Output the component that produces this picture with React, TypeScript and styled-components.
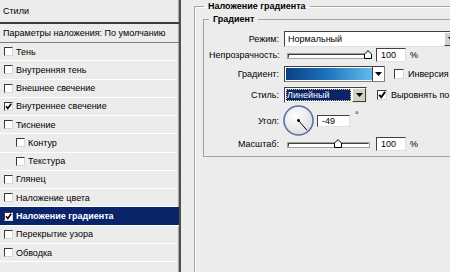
import React from 'react';
import styled, { createGlobalStyle } from 'styled-components';

const GlobalStyle = createGlobalStyle`
  html, body {
    margin: 0;
    padding: 0;
    width: 450px;
    height: 272px;
    overflow: hidden;
    background: #ececec;
  }
  body {
    font-family: 'Liberation Sans', Arial, sans-serif;
    font-size: 9px;
    color: #000;
  }
`;

type Effect = {
  label: string;
  checked?: boolean;
  indent?: boolean;
  selected?: boolean;
};

const effects: Effect[] = [
  { label: 'Тень' },
  { label: 'Внутренняя тень' },
  { label: 'Внешнее свечение' },
  { label: 'Внутреннее свечение', checked: true },
  { label: 'Тиснение' },
  { label: 'Контур', indent: true },
  { label: 'Текстура', indent: true },
  { label: 'Глянец' },
  { label: 'Наложение цвета' },
  { label: 'Наложение градиента', checked: true, selected: true },
  { label: 'Перекрытие узора' },
  { label: 'Обводка' },
];

const Check = ({ checked, size = 9 }: { checked?: boolean; size?: number }) => (
  <Box $size={size}>
    {checked && (
      <svg width={size - 2} height={size - 2} viewBox="0 0 7 7">
        <path d="M1 3.3 L2.8 5.4 L6.2 0.8" fill="none" stroke="#000" strokeWidth="1.6" />
      </svg>
    )}
  </Box>
);

const Arrow = () => (
  <svg width="7" height="4" viewBox="0 0 7 4">
    <path d="M0 0 H7 L3.5 4 Z" fill="#000" />
  </svg>
);

const Slider = ({ value }: { value: number }) => (
  <Track>
    <Thumb style={{ left: `${value * 100}%` }}>
      <svg width="8" height="9" viewBox="0 0 8 9">
        <path d="M0.5 8.5 V4 L4 0.7 L7.5 4 V8.5 Z" fill="#fff" stroke="#000" strokeWidth="1" />
      </svg>
    </Thumb>
  </Track>
);

const Dial = ({ angle }: { angle: number }) => {
  const r = (angle * Math.PI) / 180;
  const x2 = 15.5 + Math.cos(r) * 13;
  const y2 = 15.5 - Math.sin(r) * 13;
  return (
    <DialWrap>
      <svg width="31" height="31" viewBox="0 0 31 31">
        <defs>
          <radialGradient id="dialFill" cx="0.4" cy="0.35" r="0.7">
            <stop offset="0" stopColor="#ffffff" />
            <stop offset="1" stopColor="#dcdcdc" />
          </radialGradient>
        </defs>
        <circle cx="15.5" cy="15.5" r="14.5" fill="url(#dialFill)" stroke="#5a6fa6" strokeWidth="1.6" />
        <line x1="15.5" y1="15.5" x2={x2} y2={y2} stroke="#000" strokeWidth="1" />
        <circle cx="15.5" cy="15.5" r="1.4" fill="#000" />
      </svg>
    </DialWrap>
  );
};

const App = () => {
  return (
    <>
      <GlobalStyle />
      <Window>
        <StylesPanel>
          <PanelHeader>Стили</PanelHeader>
          <BlendingRow>Параметры наложения: По умолчанию</BlendingRow>
          {effects.map((e) => (
            <EffectRow key={e.label} $indent={e.indent} $selected={e.selected}>
              <Check checked={e.checked} />
              <span>{e.label}</span>
            </EffectRow>
          ))}
        </StylesPanel>

        <Options>
          <Group>
            <Legend>Наложение градиента</Legend>
            <InnerGroup>
              <InnerLegend>Градиент</InnerLegend>

              <Row $top={6} $h={16}>
                <Label>Режим:</Label>
                <Select $width={175}>
                  <SelectText>Нормальный</SelectText>
                  <DropButton>
                    <Arrow />
                  </DropButton>
                </Select>
              </Row>

              <Row $top={0} $h={16}>
                <Label>Непрозрачность:</Label>
                <Slider value={1} />
                <NumberField>100</NumberField>
                <Unit>%</Unit>
              </Row>

              <Row $top={3} $h={16}>
                <Label>Градиент:</Label>
                <GradientField>
                  <GradientSwatch />
                  <GradientDrop>
                    <Arrow />
                  </GradientDrop>
                </GradientField>
                <CheckLabel $gap={9}>
                  <Check size={10} />
                  <span>Инверсия</span>
                </CheckLabel>
              </Row>

              <Row $top={4} $h={17}>
                <Label>Стиль:</Label>
                <Select $width={83}>
                  <Highlight>Линейный</Highlight>
                  <DropButton>
                    <Arrow />
                  </DropButton>
                </Select>
                <CheckLabel $gap={10}>
                  <Check size={10} checked />
                  <span>Выровнять по слою</span>
                </CheckLabel>
              </Row>

              <Row $top={2} $h={31}>
                <Label>Угол:</Label>
                <Dial angle={-49} />
                <AngleField>-49</AngleField>
                <Degree>°</Degree>
              </Row>

              <Row $top={0} $h={16}>
                <Label>Масштаб:</Label>
                <Slider value={0.62} />
                <NumberField>100</NumberField>
                <Unit>%</Unit>
              </Row>
            </InnerGroup>
          </Group>
        </Options>
      </Window>
    </>
  );
};

const Window = styled.div`
  display: flex;
  width: 450px;
  height: 272px;
  overflow: hidden;
`;

const StylesPanel = styled.div`
  flex: none;
  width: 181px;
  height: 272px;
  box-sizing: border-box;
  border-right: 2px solid #505050;
  box-shadow: inset -1px 0 0 #a8a8a8;
  display: flex;
  flex-direction: column;
`;

const PanelHeader = styled.div`
  flex: none;
  height: 22px;
  padding-left: 3px;
  display: flex;
  align-items: center;
  border-bottom: 2px solid #3c3c3c;
  box-sizing: content-box;
`;

const BlendingRow = styled.div`
  flex: none;
  height: 18px;
  padding-left: 3px;
  display: flex;
  align-items: center;
  white-space: nowrap;
  border-bottom: 1px solid #7c7c7c;
  box-sizing: content-box;
`;

const EffectRow = styled.div<{ $indent?: boolean; $selected?: boolean }>`
  flex: none;
  height: 18.28px;
  box-sizing: border-box;
  border-bottom: 1px solid #ffffff;
  display: flex;
  align-items: center;
  gap: 3px;
  white-space: nowrap;
  padding-left: ${(p) => (p.$indent ? 16 : 4)}px;
  margin-right: ${(p) => (p.$selected ? 0 : 2)}px;
  background: ${(p) => (p.$selected ? '#0a246a' : 'transparent')};
  color: ${(p) => (p.$selected ? '#fff' : '#000')};
  font-weight: ${(p) => (p.$selected ? 'bold' : 'normal')};
`;

const Box = styled.span<{ $size: number }>`
  flex: none;
  width: ${(p) => p.$size}px;
  height: ${(p) => p.$size}px;
  box-sizing: border-box;
  background: #fff;
  border: 1px solid;
  border-color: #3a3a3a #d8d8d8 #d8d8d8 #3a3a3a;
  display: flex;
  align-items: center;
  justify-content: center;
`;

const Options = styled.div`
  flex: none;
  margin-left: 13px;
  width: 270px;
`;

const Group = styled.fieldset`
  margin: 0;
  padding: 1px 8px 0 8px;
  border: none;
  border-top: 1px solid #a2a2a2;
  border-left: 1px solid #a2a2a2;
  min-height: 300px;
  box-shadow: inset 1px 1px 0 #fff;
`;

const Legend = styled.legend`
  margin-left: 1px;
  padding: 0 4px;
  font-weight: bold;
  line-height: 12px;
`;

const InnerGroup = styled.fieldset`
  margin: 0;
  padding: 0 0 4px 5px;
  border: 1px solid #a2a2a2;
  border-right: none;
  display: flex;
  flex-direction: column;
`;

const InnerLegend = styled.legend`
  padding: 0 4px;
  font-weight: bold;
  line-height: 12px;
`;

const Row = styled.div<{ $top: number; $h: number }>`
  display: flex;
  align-items: center;
  margin-top: ${(p) => p.$top}px;
  height: ${(p) => p.$h}px;
`;

const Label = styled.span`
  flex: none;
  width: 70px;
  margin-right: 5px;
  text-align: right;
  white-space: nowrap;
`;

const Select = styled.div<{ $width: number }>`
  flex: none;
  width: ${(p) => p.$width}px;
  height: 16px;
  box-sizing: border-box;
  background: #fff;
  border: 1px solid;
  border-color: #404040 #e0e0e0 #e0e0e0 #404040;
  display: flex;
  align-items: stretch;
`;

const SelectText = styled.span`
  flex: 1;
  padding-left: 3px;
  display: flex;
  align-items: center;
`;

const Highlight = styled.span`
  flex: 1;
  margin: 1px;
  padding-left: 1px;
  background: #0a246a;
  color: #fff;
  outline: 1px dotted #d8c890;
  outline-offset: -1px;
  display: flex;
  align-items: center;
`;

const DropButton = styled.span`
  flex: none;
  width: 12px;
  background: #d4d0c8;
  border: 1px solid;
  border-color: #fff #404040 #404040 #fff;
  display: flex;
  align-items: center;
  justify-content: center;
`;

const Track = styled.div`
  position: relative;
  flex: none;
  width: 81px;
  height: 4px;
  margin-left: 4px;
  margin-right: 7px;
  margin-top: 2px;
  box-sizing: border-box;
  background: #fff;
  border: 1px solid;
  border-color: #404040 #fff #fff #404040;
  box-shadow: 0 0 0 1px #a0a0a0;
`;

const Thumb = styled.span`
  position: absolute;
  bottom: -2px;
  transform: translateX(-50%);
  display: block;
  line-height: 0;
`;

const NumberField = styled.span`
  flex: none;
  width: 30px;
  height: 14px;
  box-sizing: border-box;
  padding-left: 4px;
  background: #fff;
  border: 1px solid;
  border-color: #404040 #e0e0e0 #e0e0e0 #404040;
  display: flex;
  align-items: center;
`;

const AngleField = styled(NumberField)`
  width: 33px;
  height: 12px;
  margin-left: 3px;
`;

const Unit = styled.span`
  margin-left: 4px;
`;

const Degree = styled.span`
  margin-left: 5px;
  align-self: flex-start;
  margin-top: 5px;
`;

const GradientField = styled.div`
  flex: none;
  width: 101px;
  height: 16px;
  box-sizing: border-box;
  border: 1px solid;
  border-color: #404040 #808080 #808080 #404040;
  background: #fff;
  display: flex;
`;

const GradientSwatch = styled.span`
  flex: 1;
  margin: 1px 0 1px 1px;
  background: linear-gradient(to right, #0b3f82, #1a6fb8 45%, #62bbec);
`;

const GradientDrop = styled.span`
  flex: none;
  width: 11px;
  border-left: 1px solid #404040;
  display: flex;
  align-items: center;
  justify-content: center;
`;

const CheckLabel = styled.span<{ $gap: number }>`
  display: flex;
  align-items: center;
  gap: 4px;
  margin-left: ${(p) => p.$gap}px;
  white-space: nowrap;
`;

const DialWrap = styled.span`
  flex: none;
  margin-left: -1px;
  line-height: 0;
`;

export default App;
